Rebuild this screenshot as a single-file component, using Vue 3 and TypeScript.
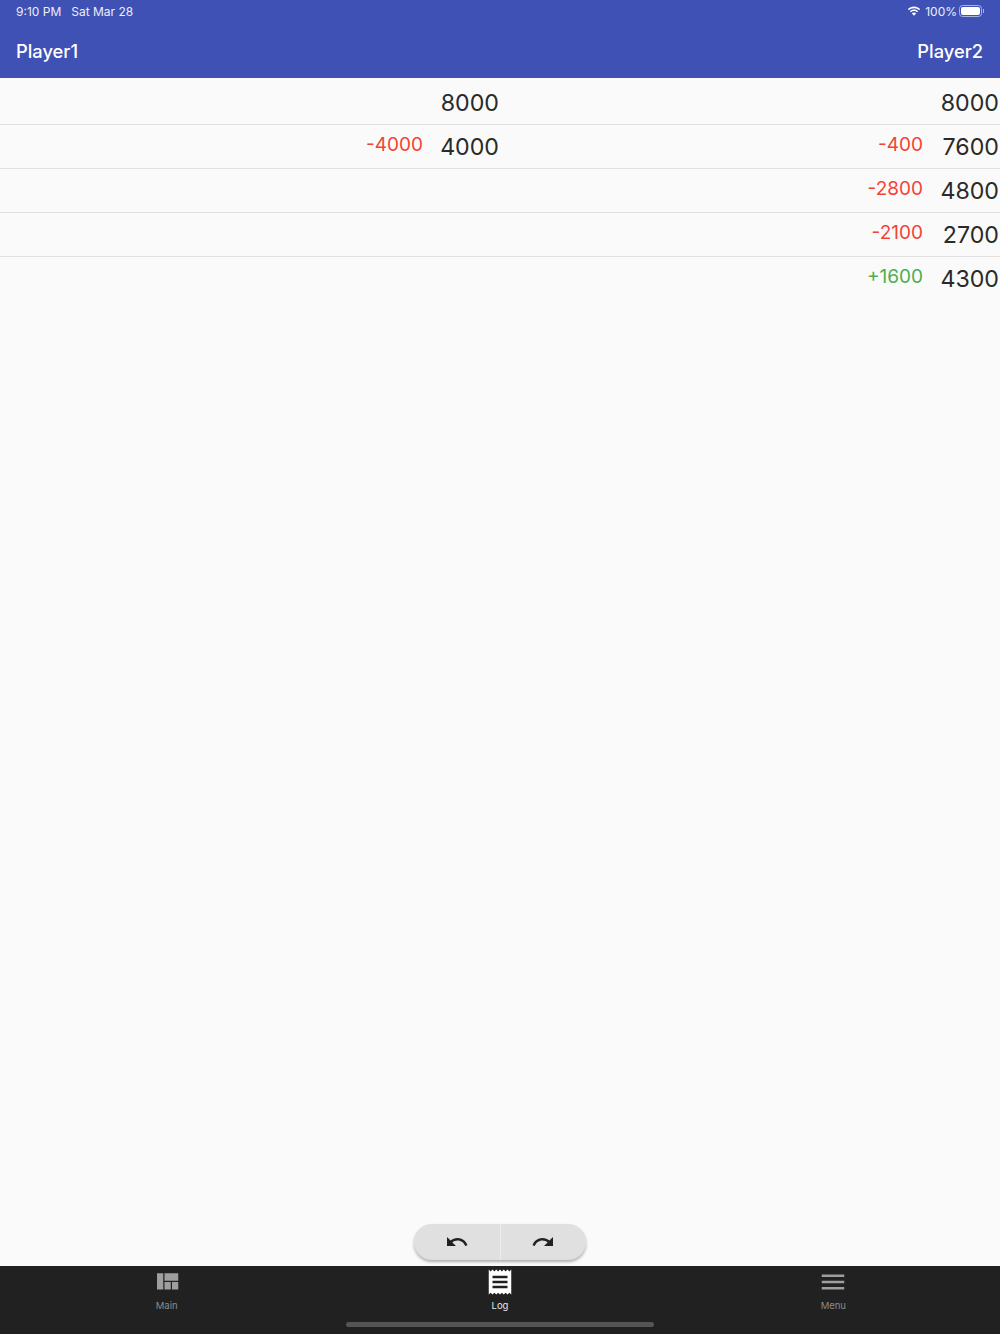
<script setup lang="ts">
interface Side {
  delta?: number;
  value?: number;
}

interface LogRow {
  left: Side;
  right: Side;
}

const rows: LogRow[] = [
  { left: { value: 8000 }, right: { value: 8000 } },
  { left: { delta: -4000, value: 4000 }, right: { delta: -400, value: 7600 } },
  { left: {}, right: { delta: -2800, value: 4800 } },
  { left: {}, right: { delta: -2100, value: 2700 } },
  { left: {}, right: { delta: 1600, value: 4300 } },
];

const tabs = [
  { label: "Main", active: false, d: "M10 18h5v-6h-5v6zm-6 0h5V5H4v13zm12 0h5v-6h-5v6zM10 5v6h11V5H10z" },
  {
    label: "Log",
    active: true,
    d: "M18 17H6v-2h12v2zm0-4H6v-2h12v2zm0-4H6V7h12v2zM3 22l1.500-1.500L6 22l1.500-1.500L9 22l1.500-1.500L12 22l1.500-1.500L15 22l1.500-1.500L18 22l1.500-1.500L21 22V2l-1.500 1.500L18 2l-1.500 1.500L15 2l-1.500 1.500L12 2l-1.500 1.500L9 2 7.500 3.500 6 2 4.500 3.500 3 2v20z",
  },
  { label: "Menu", active: false, d: "M3 18h18v-2H3v2zm0-5h18v-2H3v2zm0-7v2h18V6H3z" },
];

function formatDelta(delta: number) {
  return delta > 0 ? `+${delta}` : `${delta}`;
}
</script>

<template>
  <div class="page">
    <header class="header">
      <div class="status">
        <div class="status-time">
          <span>9:10 PM</span>
          <span>Sat Mar 28</span>
        </div>
        <div class="status-right">
          <svg class="wifi" width="14" height="11" viewBox="0 0 14 11">
            <path d="M7 2.2c2 0 3.8.8 5.1 2l1-1.1C11.500 1.600 9.400.6 7 .6S2.500 1.600.9 3.100l1 1.100c1.300-1.200 3.100-2 5.100-2z" />
            <path d="M7 5.100c1.200 0 2.300.5 3.100 1.200l1-1.100C9.900 4.100 8.500 3.500 7 3.500s-2.900.6-4.100 1.700l1 1.100C4.700 5.600 5.800 5.100 7 5.100z" />
            <path d="M7 6.500c-.9 0-1.600.3-2.200.8L7 9.800l2.200-2.500c-.6-.5-1.300-.8-2.200-.8z" />
          </svg>
          <span>100%</span>
          <div class="battery">
            <div class="battery-level"></div>
          </div>
          <div class="battery-tip"></div>
        </div>
      </div>
      <div class="players">
        <span>Player1</span>
        <span>Player2</span>
      </div>
    </header>

    <main class="content">
      <div class="log">
        <div v-for="(row, i) in rows" :key="i" class="row">
          <div v-for="(side, j) in [row.left, row.right]" :key="j" class="side">
            <span
              v-if="side.delta !== undefined"
              class="delta"
              :class="side.delta > 0 ? 'up' : 'down'"
            >{{ formatDelta(side.delta) }}</span>
            <span v-if="side.value !== undefined" class="value">{{ side.value }}</span>
          </div>
        </div>
      </div>

      <div class="undo-bar">
        <button class="undo-btn" type="button">
          <svg width="24" height="24" viewBox="0 0 24 24">
            <path d="M12.500 8c-2.650 0-5.050.99-6.900 2.600L2 7v9h9l-3.620-3.620c1.390-1.160 3.160-1.880 5.120-1.880 3.540 0 6.550 2.310 7.600 5.500l2.370-.78C21.080 11.030 17.150 8 12.500 8z" />
          </svg>
        </button>
        <button class="undo-btn" type="button">
          <svg width="24" height="24" viewBox="0 0 24 24">
            <path d="M18.400 10.600C16.550 8.990 14.150 8 11.500 8c-4.650 0-8.580 3.030-9.960 7.220L3.900 16c1.050-3.190 4.050-5.500 7.600-5.500 1.950 0 3.730.72 5.120 1.880L13 16h9V7l-3.600 3.600z" />
          </svg>
        </button>
      </div>
    </main>

    <nav class="tabbar">
      <div class="tabs">
        <div v-for="tab in tabs" :key="tab.label" class="tab" :class="{ active: tab.active }">
          <svg width="30" height="30" viewBox="0 0 24 24">
            <path :d="tab.d" />
          </svg>
          <span>{{ tab.label }}</span>
        </div>
      </div>
      <div class="home-indicator"></div>
    </nav>
  </div>
</template>

<style scoped>
.page {
  display: flex;
  flex-direction: column;
  width: 1000px;
  height: 1334px;
  overflow: hidden;
  background: #fafafa;
  color: #2a2a2a;
  font-family: Inter, "Liberation Sans", sans-serif;
}

.header {
  flex: none;
  height: 78px;
  box-sizing: border-box;
  background: #3f51b5;
  color: #fff;
}

.status {
  display: flex;
  justify-content: space-between;
  align-items: center;
  height: 22px;
  padding: 0 16px 0 16px;
  font-size: 12px;
  color: #eceef8;
}

.status-time {
  display: flex;
  gap: 10px;
}

.status-right {
  display: flex;
  align-items: center;
}

.wifi {
  margin-right: 4px;
  fill: #fff;
}

.battery {
  width: 23px;
  height: 12px;
  margin-left: 2px;
  padding: 1px;
  box-sizing: border-box;
  border: 1px solid #a9b2e0;
  border-radius: 3.500px;
}

.battery-level {
  height: 100%;
  background: #fff;
  border-radius: 2px;
}

.battery-tip {
  width: 1px;
  height: 4px;
  margin-left: 1px;
  background: #a9b2e0;
}

.players {
  display: flex;
  justify-content: space-between;
  padding: 14px 17px 0 16px;
  font-size: 18.300px;
  font-weight: 500;
  line-height: 30px;
}

.content {
  flex: 1;
  display: flex;
  flex-direction: column;
  justify-content: space-between;
  min-height: 0;
}

.row {
  display: grid;
  grid-template-columns: 500px 500px;
  height: 44px;
  box-sizing: border-box;
  border-bottom: 1px solid #e0e0e0;
}

.row:first-child {
  height: 46.500px;
  padding-top: 2px;
}

.row:last-child {
  border-bottom-color: transparent;
}

.side {
  display: flex;
  justify-content: flex-end;
  align-items: center;
  padding-right: 1px;
}

.delta {
  margin-right: 16px;
  margin-top: -4px;
  font-size: 19px;
}

.down {
  color: #f44336;
}

.up {
  color: #4caf50;
}

.value {
  width: 60px;
  margin-top: 2px;
  font-size: 23.200px;
  line-height: 30px;
  text-align: right;
}

.undo-bar {
  display: flex;
  align-self: center;
  width: 172px;
  height: 36px;
  margin-bottom: 6px;
  border-radius: 18px;
  background: #e0e0e0;
  box-shadow: 0 2px 3px rgba(0, 0, 0, 0.3);
}

.undo-btn {
  flex: 1;
  display: flex;
  align-items: center;
  justify-content: center;
  padding: 0;
  border: none;
  background: none;
  fill: #212121;
}

.undo-btn:first-child {
  border-right: 1px solid #ececec;
}

.tabbar {
  flex: none;
  display: flex;
  flex-direction: column;
  height: 68px;
  box-sizing: border-box;
  background: #212121;
}

.tabs {
  display: grid;
  grid-template-columns: repeat(3, 1fr);
  height: 56px;
}

.tab {
  display: flex;
  flex-direction: column;
  align-items: center;
  padding-top: 1px;
  font-size: 9.500px;
  line-height: 14px;
  color: #8c8c8c;
  fill: #9e9e9e;
}

.tab span {
  margin-top: 2px;
}

.tab.active {
  color: #e8e8e8;
  fill: #fff;
}

.home-indicator {
  align-self: center;
  width: 308px;
  height: 5px;
  border-radius: 3px;
  background: #555;
}
</style>
